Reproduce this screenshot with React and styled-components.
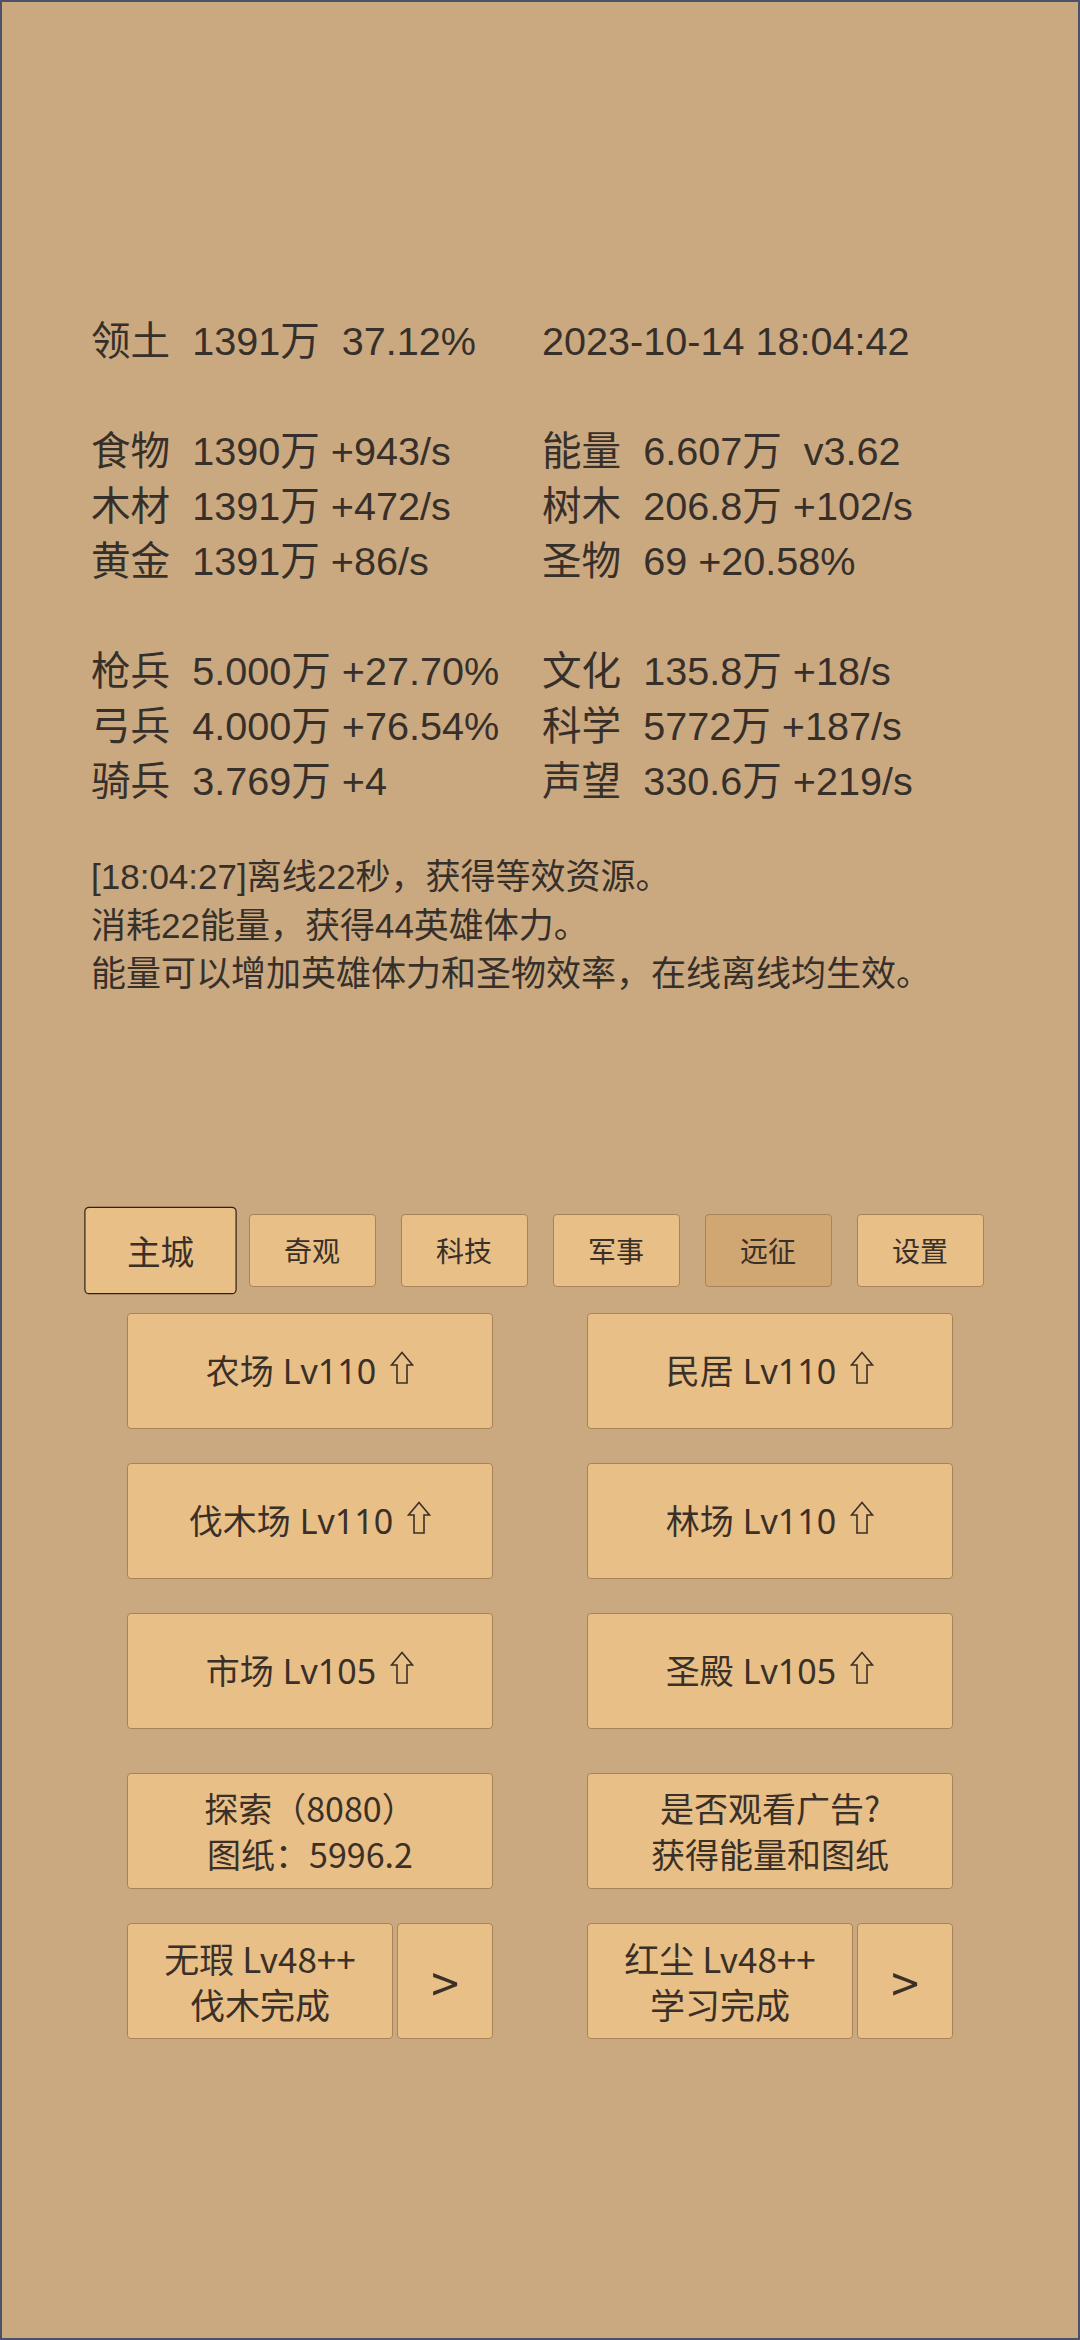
import React from 'react'
import styled, { createGlobalStyle } from 'styled-components'

const GlobalStyle = createGlobalStyle`
  html, body {
    margin: 0;
    padding: 0;
    background: #caa981;
  }
  * { box-sizing: border-box; }
`

const Screen = styled.div`
  width: 1080px;
  height: 2340px;
  border: 2px solid #4b506b;
  background: #caa981;
  color: #37302a;
  font-family: "Liberation Sans", "Noto Sans CJK SC", sans-serif;
  display: flex;
  flex-direction: column;
  padding-top: 312px;
`

const Stats = styled.div`
  padding-left: 89px;
  display: flex;
  flex-direction: column;
  gap: 55px;
`

const StatGrid = styled.div`
  display: grid;
  grid-template-columns: 451px 1fr;
  font-size: 39.6px;
  line-height: 55px;
  white-space: pre;
`

const Log = styled.div`
  margin-top: 44px;
  padding-left: 89px;
  font-size: 35px;
  line-height: 48.5px;
`

const Tabs = styled.div`
  margin-top: 215px;
  display: flex;
  justify-content: center;
  gap: 25px;
`

const Tab = styled.div`
  width: 127px;
  height: 73px;
  display: flex;
  align-items: center;
  justify-content: center;
  font-family: "Noto Sans CJK SC", sans-serif;
  font-size: 28px;
  color: #3a3028;
  border-radius: 4px;
  background: ${({ $pressed }) => ($pressed ? '#d0a673' : '#e8bf87')};
  border: 1.5px solid ${({ $active }) => ($active ? '#2e2216' : '#a8835a')};
  transform: ${({ $active }) => ($active ? 'scale(1.2)' : 'none')};
`

const Buttons = styled.div`
  margin-top: 26px;
  display: grid;
  grid-template-columns: 366px 366px;
  column-gap: 94px;
  row-gap: 34px;
  justify-content: center;
`

const Extra = styled(Buttons)`
  margin-top: 44px;
`

const Btn = styled.div`
  height: 116px;
  display: flex;
  align-items: center;
  justify-content: center;
  text-align: center;
  background: #e8bf87;
  border: 1.5px solid #a8835a;
  border-radius: 4px;
  font-family: ${({ $latin }) => ($latin ? '"Noto Sans", ' : '')}"Noto Sans CJK SC", sans-serif;
  font-size: 34px;
  line-height: 46px;
  color: #3a3028;
  white-space: pre;
`

const UpArrow = styled.svg`
  width: 24px;
  height: 33px;
  margin-left: 14px;
  margin-bottom: 6px;
  flex: none;
`

const Pair = styled.div`
  display: flex;
  gap: 4px;
`

const Main = styled(Btn)`
  flex: 1;
  font-size: 35px;
`

const Next = styled(Btn)`
  width: 96px;
  font-size: 50px;
`

const statGroups = [
  [['领土  1391万  37.12%', '2023-10-14 18:04:42']],
  [
    ['食物  1390万 +943/s', '能量  6.607万  v3.62'],
    ['木材  1391万 +472/s', '树木  206.8万 +102/s'],
    ['黄金  1391万 +86/s', '圣物  69 +20.58%'],
  ],
  [
    ['枪兵  5.000万 +27.70%', '文化  135.8万 +18/s'],
    ['弓兵  4.000万 +76.54%', '科学  5772万 +187/s'],
    ['骑兵  3.769万 +4', '声望  330.6万 +219/s'],
  ],
]

const tabs = ['主城', '奇观', '科技', '军事', '远征', '设置']

const buildings = ['农场', '民居', '伐木场', '林场', '市场', '圣殿']
const levels = [110, 110, 110, 110, 105, 105]

function Upgrade() {
  return (
    <UpArrow viewBox="0 0 24 33">
      <path
        d="M12 1.5 L22.5 14 L17 14 L17 32 L7 32 L7 14 L1.5 14 Z"
        fill="none"
        stroke="#3a3028"
        strokeWidth="1.6"
        strokeLinejoin="miter"
      />
    </UpArrow>
  )
}

export default function App() {
  return (
    <>
      <GlobalStyle />
      <Screen>
        <Stats>
          {statGroups.map((group, i) => (
            <StatGrid key={i}>
              {group.map(([l, r]) => (
                <React.Fragment key={l}>
                  <span>{l}</span>
                  <span>{r}</span>
                </React.Fragment>
              ))}
            </StatGrid>
          ))}
        </Stats>
        <Log>
          <div>[18:04:27]离线22秒，获得等效资源。</div>
          <div>消耗22能量，获得44英雄体力。</div>
          <div>能量可以增加英雄体力和圣物效率，在线离线均生效。</div>
        </Log>
        <Tabs>
          {tabs.map((t, i) => (
            <Tab key={t} $active={i === 0} $pressed={i === 4}>{t}</Tab>
          ))}
        </Tabs>
        <Buttons>
          {buildings.map((b, i) => (
            <Btn key={b} $latin>
              {b} Lv{levels[i]}
              <Upgrade />
            </Btn>
          ))}
        </Buttons>
        <Extra>
          <Btn>{'探索（8080）\n图纸：5996.2'}</Btn>
          <Btn>{'是否观看广告?\n获得能量和图纸'}</Btn>
          <Pair>
            <Main>{'无瑕 Lv48++\n伐木完成'}</Main>
            <Next>&gt;</Next>
          </Pair>
          <Pair>
            <Main>{'红尘 Lv48++\n学习完成'}</Main>
            <Next>&gt;</Next>
          </Pair>
        </Extra>
      </Screen>
    </>
  )
}
